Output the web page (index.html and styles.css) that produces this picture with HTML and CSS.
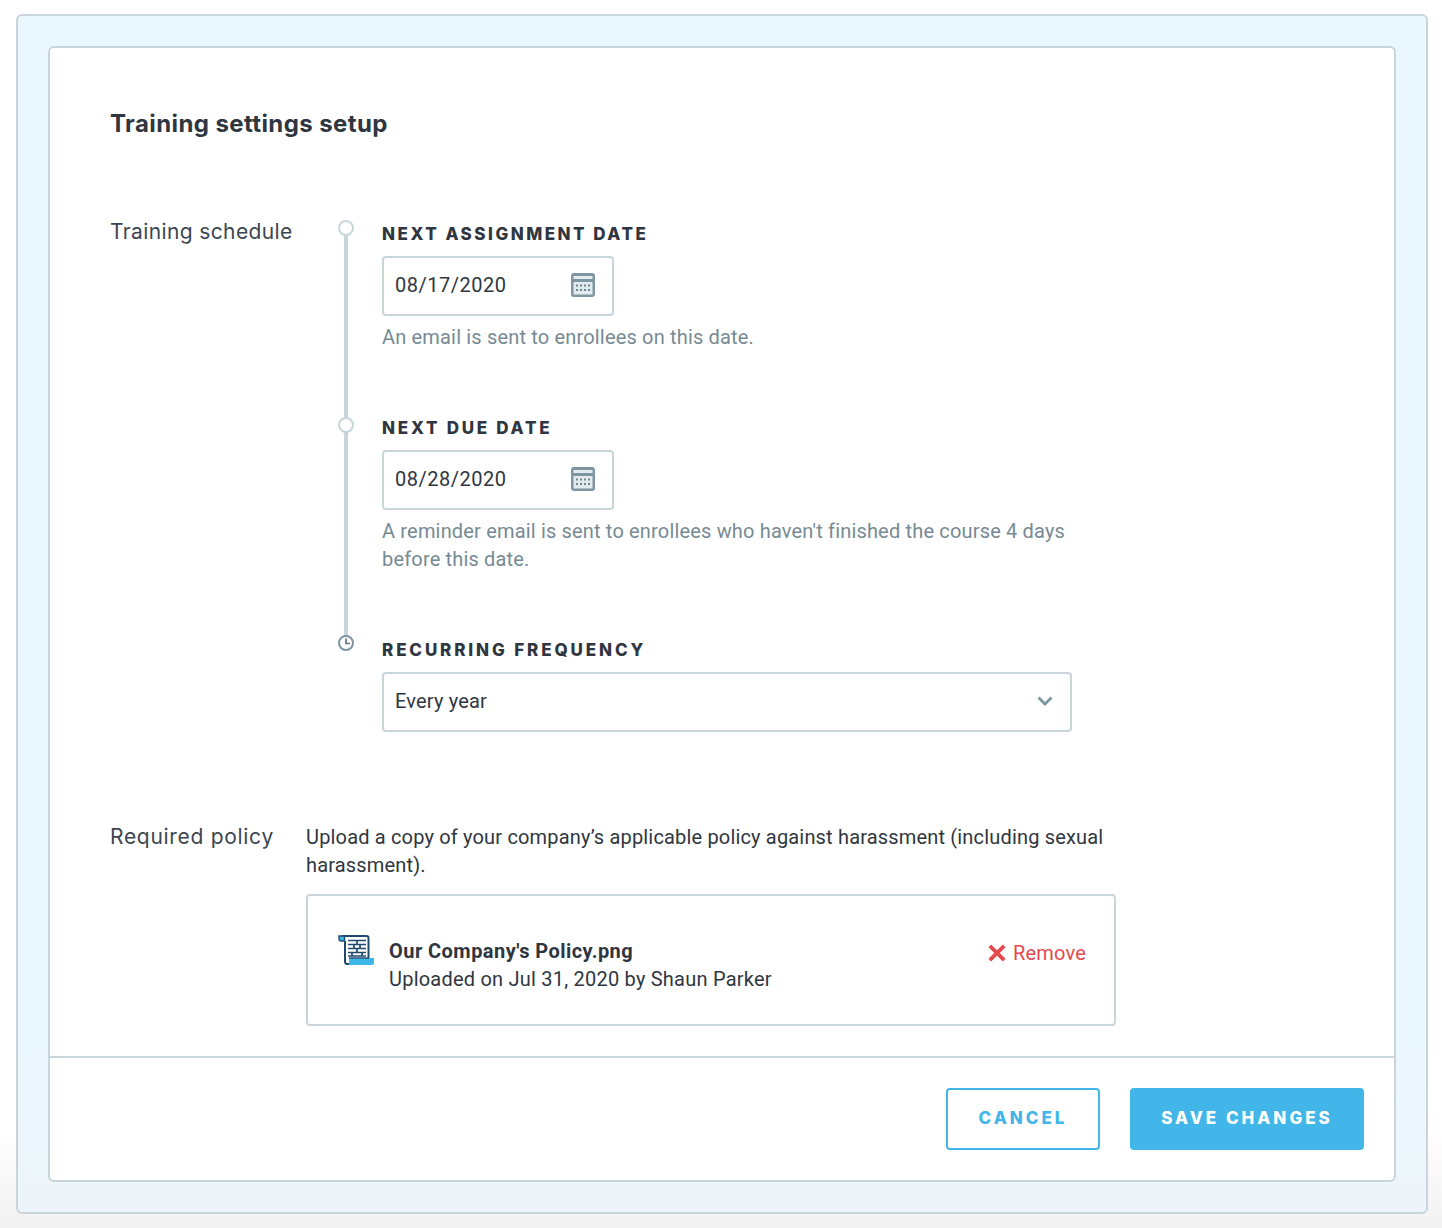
FILE: index.html
```html
<!DOCTYPE html>
<html lang="en">
<head>
<meta charset="utf-8">
<title>Training settings setup</title>
<link rel="stylesheet" href="styles.css">
</head>
<body>
<div class="panel">
  <div class="card">
    <div class="card-body">
      <h1 class="title">Training settings setup</h1>
      <div class="row row-schedule">
        <div class="row-label">Training schedule</div>
        <div class="timeline">
          <div class="rail"></div>
          <div class="step step-one">
            <span class="dot"></span>
            <div class="step-body">
              <div class="field-label">NEXT ASSIGNMENT DATE</div>
              <div class="input date-input">
                <span class="date-value">08/17/2020</span>
                <svg class="cal" viewBox="0 0 24 24" width="24" height="24"><rect x="0" y="0" width="24" height="24" rx="3" fill="#7e96a1"/><rect x="2.500" y="3" width="19" height="3" fill="#e3eaed"/><rect x="2.500" y="9" width="19" height="12.500" fill="#e3eaed"/><g fill="#6f8894"><rect x="5" y="11.500" width="2" height="2"/><rect x="9" y="11.500" width="2" height="2"/><rect x="13" y="11.500" width="2" height="2"/><rect x="17" y="11.500" width="2" height="2"/><rect x="5" y="16" width="2" height="2"/><rect x="9" y="16" width="2" height="2"/><rect x="13" y="16" width="2" height="2"/><rect x="17" y="16" width="2" height="2"/></g></svg>
              </div>
              <p class="help">An email is sent to enrollees on this date.</p>
            </div>
          </div>
          <div class="step step-two">
            <span class="dot dot-low"></span>
            <div class="step-body">
              <div class="field-label">NEXT DUE DATE</div>
              <div class="input date-input">
                <span class="date-value">08/28/2020</span>
                <svg class="cal" viewBox="0 0 24 24" width="24" height="24"><rect x="0" y="0" width="24" height="24" rx="3" fill="#7e96a1"/><rect x="2.500" y="3" width="19" height="3" fill="#e3eaed"/><rect x="2.500" y="9" width="19" height="12.500" fill="#e3eaed"/><g fill="#6f8894"><rect x="5" y="11.500" width="2" height="2"/><rect x="9" y="11.500" width="2" height="2"/><rect x="13" y="11.500" width="2" height="2"/><rect x="17" y="11.500" width="2" height="2"/><rect x="5" y="16" width="2" height="2"/><rect x="9" y="16" width="2" height="2"/><rect x="13" y="16" width="2" height="2"/><rect x="17" y="16" width="2" height="2"/></g></svg>
              </div>
              <p class="help">A reminder email is sent to enrollees who haven't finished the course 4 days before this date.</p>
            </div>
          </div>
          <div class="step step-three">
            <svg class="clock" viewBox="0 0 16 16" width="16" height="16"><circle cx="8" cy="8" r="7" fill="#fff" stroke="#7e96a1" stroke-width="2"/><path d="M8 3.500v5h4" fill="none" stroke="#5f7682" stroke-width="1.700"/></svg>
            <div class="step-body">
              <div class="field-label">RECURRING FREQUENCY</div>
              <div class="input select-input">
                <span>Every year</span>
                <svg class="chev" viewBox="0 0 16 10" width="16" height="10"><path d="M1.500 1.500 8 8l6.500-6.500" fill="none" stroke="#7e96a1" stroke-width="2.800"/></svg>
              </div>
            </div>
          </div>
        </div>
      </div>
      <div class="row row-policy">
        <div class="row-label policy-label">Required policy</div>
        <div class="policy">
          <p class="policy-text">Upload a copy of your company’s applicable policy against harassment (including sexual harassment).</p>
          <div class="file-box">
            <svg class="doc" viewBox="0 0 36 30" width="36" height="30">
              <path d="M4 1h24.500a2 2 0 0 1 2 2v21" fill="#fff" stroke="#1f4a6e" stroke-width="2"/>
              <path d="M7 6v20.500a2.500 2.500 0 0 0 2.500 2.500H13" fill="none" stroke="#1f4a6e" stroke-width="2"/>
              <path d="M1 1h5.500v5H3a2 2 0 0 1-2-2z" fill="#3fb6e8" stroke="#1f4a6e" stroke-width="1.400"/>
              <path d="M10 5.500h18M10 9.500h18M10 13.500h18M10 17.500h18M10 21h18M19 5.500v4M16 9.500v4M22 9.500v4M19 13.500v4M14 17.500v3.500M24 17.500v3.500" fill="none" stroke="#1f4a6e" stroke-width="1.700"/>
              <path d="M11 23h25v5a2 2 0 0 1-2 2H11z" fill="#3fb6e8"/>
              <path d="M11 23h20" stroke="#1f4a6e" stroke-width="1.400"/>
            </svg>
            <div class="file-info">
              <div class="file-name">Our Company's Policy.png</div>
              <div class="file-meta">Uploaded on Jul 31, 2020 by Shaun Parker</div>
            </div>
            <div class="remove">
              <svg viewBox="0 0 18 18" width="18" height="18"><path d="M1.800 1.800l14.400 14.400M16.200 1.800 1.800 16.200" stroke="#e5484d" stroke-width="3.800" fill="none"/></svg>
              <span>Remove</span>
            </div>
          </div>
        </div>
      </div>
    </div>
    <div class="card-footer">
      <button class="btn btn-outline" type="button">CANCEL</button>
      <button class="btn btn-solid" type="button">SAVE CHANGES</button>
    </div>
  </div>
</div>
</body>
</html>
```
FILE: styles.css
```css
* { box-sizing: border-box; }
html, body { margin: 0; height: 100%; }
body {
  height: 1228px;
  padding: 14px 14px 14px 16px;
  background: linear-gradient(#fff 92%, #f2f2f2);
  font-family: "Roboto", "Liberation Sans", sans-serif;
  font-size: 20px;
  line-height: 28px;
  letter-spacing: 0.17px;
  color: #2f3640;
  overflow: hidden;
}
.panel {
  height: 1200px;
  padding: 30px;
  border: 2px solid #c8d6dc;
  border-radius: 6px;
  background: linear-gradient(#ebf7fe 85%, #edf5fa);
}
.card {
  height: 1136px;
  display: flex;
  flex-direction: column;
  border: 2px solid #c8d6dc;
  border-radius: 6px;
  background: #fff;
}
.card-body { flex: 1; padding: 60px 60px 0; }
.title {
  margin: 0;
  font-family: "Inter", sans-serif;
  font-size: 24px;
  line-height: 32px;
  font-weight: 700;
  letter-spacing: 0.4px;
  color: #2f3640;
}
.row { display: flex; }
.row-schedule { margin-top: 80px; }
.row-label {
  font-family: "Inter", sans-serif;
  font-size: 21px;
  letter-spacing: 0.38px;
  color: #3c4650;
}
.row-schedule .row-label { width: 228px; margin-top: -2px; }
.policy-label { width: 196px; letter-spacing: 0.7px; }
.timeline { position: relative; width: 734px; }
.rail {
  position: absolute;
  left: 6px;
  top: 8px;
  height: 416px;
  width: 4px;
  background: #c8d6dc;
}
.step { position: relative; display: flex; gap: 28px; }
.step-one { height: 194px; }
.step-two { height: 222px; }
.step-three { height: 96px; }
.dot, .clock {
  position: relative;
  flex: none;
  display: block;
  width: 16px;
  height: 16px;
  border: 2px solid #c8d6dc;
  border-radius: 50%;
  background: #fff;
}
.clock { margin-top: -1px; border: 0; border-radius: 0; background: none; }
.dot-low { margin-top: 3px; }
.step-body { flex: 1; }
.field-label {
  font-family: "Inter", sans-serif;
  font-size: 17px;
  line-height: 28px;
  font-weight: 800;
  letter-spacing: 2.5px;
  color: #2f3640;
}
.step-two .field-label { letter-spacing: 2.75px; }
.step-three .field-label { letter-spacing: 2.87px; }
.input {
  display: flex;
  align-items: center;
  justify-content: space-between;
  height: 60px;
  margin-top: 8px;
  padding: 0 17px 0 11px;
  border: 2px solid #c8d6dc;
  border-radius: 4px;
  background: #fff;
}
.input span { position: relative; top: -1px; }
.date-value { letter-spacing: 0.5px; }
.cal { margin-top: -2px; }
.chev { margin-top: -2px; }
.date-input { width: 232px; }
.select-input { width: 690px; }
.help {
  margin: 7px 0 0;
  width: 690px;
  color: #768a94;
}
.row-policy { margin-top: 91px; }
.policy { width: 810px; }
.policy-text { margin: 0; }
.file-box {
  display: flex;
  align-items: center;
  height: 132px;
  margin-top: 15px;
  padding: 0 28px 0 30px;
  border: 2px solid #c8d6dc;
  border-radius: 4px;
}
.doc { flex: none; margin-top: -20px; }
.file-info { flex: 1; margin: 10px 0 0 15px; }
.file-name { font-weight: 700; letter-spacing: 0.45px; }
.file-meta { letter-spacing: 0.22px; }
.remove {
  display: flex;
  align-items: center;
  gap: 7px;
  margin-top: -14px;
  color: #e5484d;
}
.card-footer {
  display: flex;
  justify-content: flex-end;
  align-items: center;
  gap: 30px;
  height: 124px;
  padding: 0 30px;
  border-top: 2px solid #c8d6dc;
}
.btn {
  height: 62px;
  padding-bottom: 4px;
  border-radius: 4px;
  font-family: "Inter", sans-serif;
  font-size: 17px;
  font-weight: 800;
  letter-spacing: 3px;
  border: 2px solid #42b6e8;
}
.btn-outline { width: 154px; background: #fff; color: #42b6e8; }
.btn-solid { width: 234px; background: #42b6e8; color: #fff; }
```
